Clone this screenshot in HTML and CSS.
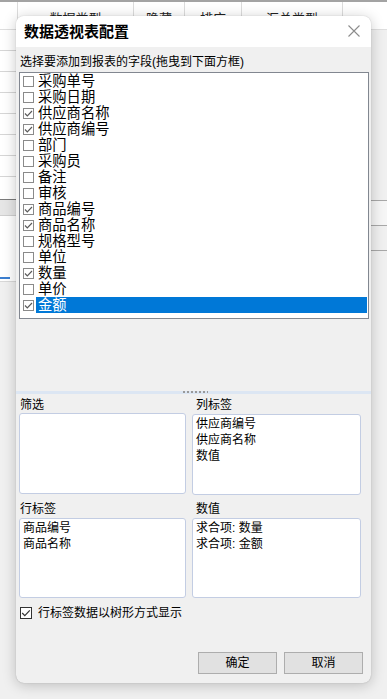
FILE: index.html
```html
<!DOCTYPE html>
<html lang="zh-CN">
<head>
<meta charset="utf-8">
<title>数据透视表配置</title>
<link rel="stylesheet" href="styles.css">
</head>
<body>
<div class="app">
  <div class="grid-head">
    <div class="gh c0"></div>
    <div class="gh c1">数据类型</div>
    <div class="gh c2">隐藏</div>
    <div class="gh c3">排序</div>
    <div class="gh c4">汇总类型</div>
    <div class="gh c5"></div>
  </div>
  <div class="app-main">
    <div class="left-col">
      <div class="lrow"></div><div class="lrow"></div><div class="lrow"></div><div class="lrow"></div>
      <div class="lrow"></div><div class="lrow"></div><div class="lrow"></div>
      <div class="lrow last"></div>
      <div class="lband"></div>
      <div class="lwhite"><div class="lblue"></div></div>
    </div>
    <div class="mid"></div>
    <div class="right-col">
      <div class="rtop"></div>
      <div class="rrow light"></div>
      <div class="rrow"></div>
    </div>
  </div>
</div>

<div class="dialog">
  <div class="titlebar">
    <span class="title">数据透视表配置</span>
    <svg class="close" width="12" height="12" viewBox="0 0 12 12"><path d="M0.5 0.5 L11.5 11.5 M11.5 0.5 L0.5 11.5" stroke="#8c8c8c" stroke-width="1.1" fill="none"/></svg>
  </div>
  <div class="top-pane">
    <div class="hint">选择要添加到报表的字段(拖曳到下面方框)</div>
    <div class="list">
      <div class="item"><span class="cb"></span><span class="lbl">采购单号</span></div>
      <div class="item"><span class="cb"></span><span class="lbl">采购日期</span></div>
      <div class="item"><span class="cb on"><svg viewBox="0 0 11 11"><path d="M2 5.5 L4.3 7.8 L9 3" /></svg></span><span class="lbl">供应商名称</span></div>
      <div class="item"><span class="cb on"><svg viewBox="0 0 11 11"><path d="M2 5.5 L4.3 7.8 L9 3" /></svg></span><span class="lbl">供应商编号</span></div>
      <div class="item"><span class="cb"></span><span class="lbl">部门</span></div>
      <div class="item"><span class="cb"></span><span class="lbl">采购员</span></div>
      <div class="item"><span class="cb"></span><span class="lbl">备注</span></div>
      <div class="item"><span class="cb"></span><span class="lbl">审核</span></div>
      <div class="item"><span class="cb on"><svg viewBox="0 0 11 11"><path d="M2 5.5 L4.3 7.8 L9 3" /></svg></span><span class="lbl">商品编号</span></div>
      <div class="item"><span class="cb on"><svg viewBox="0 0 11 11"><path d="M2 5.5 L4.3 7.8 L9 3" /></svg></span><span class="lbl">商品名称</span></div>
      <div class="item"><span class="cb"></span><span class="lbl">规格型号</span></div>
      <div class="item"><span class="cb"></span><span class="lbl">单位</span></div>
      <div class="item"><span class="cb on"><svg viewBox="0 0 11 11"><path d="M2 5.5 L4.3 7.8 L9 3" /></svg></span><span class="lbl">数量</span></div>
      <div class="item"><span class="cb"></span><span class="lbl">单价</span></div>
      <div class="item"><span class="cb on"><svg viewBox="0 0 11 11"><path d="M2 5.5 L4.3 7.8 L9 3" /></svg></span><span class="lbl sel">金额</span></div>
    </div>
  </div>
  <div class="splitter"><span class="dots"></span></div>
  <div class="bottom-pane">
    <div class="areas">
      <div class="alabel first">筛选</div>
      <div class="alabel">列标签</div>
      <div class="abox r1"></div>
      <div class="abox r1 second">
        <div>供应商编号</div>
        <div>供应商名称</div>
        <div>数值</div>
      </div>
      <div class="alabel first gap">行标签</div>
      <div class="alabel gap">数值</div>
      <div class="abox r2">
        <div>商品编号</div>
        <div>商品名称</div>
      </div>
      <div class="abox r2 second">
        <div>求合项: 数量</div>
        <div>求合项: 金额</div>
      </div>
    </div>
    <div class="tree">
      <span class="cb2"><svg viewBox="0 0 12 12"><path d="M2.2 6 L4.8 8.6 L9.8 3.4" /></svg></span>
      <span>行标签数据以树形方式显示</span>
    </div>
    <div class="buttons">
      <button class="btn">确定</button>
      <button class="btn">取消</button>
    </div>
  </div>
</div>
</body>
</html>
```

FILE: styles.css
```css
* { box-sizing: border-box; }
html, body { margin: 0; padding: 0; }
body {
  width: 387px;
  height: 699px;
  overflow: hidden;
  position: relative;
  background: #f0f0f0;
  font-family: "Liberation Sans", "Noto Sans CJK SC", sans-serif;
  font-size: 12px;
  color: #000;
}

/* background application */
.app { display: flex; flex-direction: column; height: 699px; }
.grid-head {
  display: flex;
  height: 30px;
  border-top: 2px solid #a3a3a3;
  background: #fff;
  border-bottom: 1px solid #dedede;
}
.gh {
  border-right: 1px solid #dcdcdc;
  text-align: center;
  font-size: 13px;
  line-height: 16px;
  padding-top: 9px;
  color: #222;
}
.c0 { width: 18px; }
.c1 { width: 116px; }
.c2 { width: 51px; }
.c3 { width: 57px; }
.c4 { width: 101px; }
.c5 { flex: 1; border-right: 0; }

.app-main { flex: 1; display: flex; }
.left-col { width: 16px; display: flex; flex-direction: column; }
.lrow { height: 21px; background: #fff; border-bottom: 1px solid #d6d6d6; }
.lrow.last { height: 23px; border-bottom: 1px solid #7a7a7a; }
.lband { height: 16px; background: #e6e6e6; border-bottom: 1px solid #cfcfcf; }
.lwhite { height: 66px; background: #fff; position: relative; border-bottom: 1px solid #d8d8d8; }
.lblue { position: absolute; left: 0; bottom: 2px; width: 10px; height: 2px; background: #3c7fd0; }
.mid { flex: 1; }
.right-col { width: 16px; display: flex; flex-direction: column; }
.rtop { height: 171px; border-bottom: 1px solid #a8a8a8; }
.rrow { height: 25px; border-bottom: 1px solid #a8a8a8; }
.rrow.light { background: #f6f6f6; }

/* dialog */
.dialog {
  position: absolute;
  left: 16px;
  top: 16px;
  width: 355px;
  height: 667px;
  background: #f0f0f0;
  border-radius: 8px;
  box-shadow: 0 2px 14px rgba(0, 0, 0, 0.22), 0 0 1px rgba(0, 0, 0, 0.3);
  display: flex;
  flex-direction: column;
  overflow: hidden;
}
.titlebar {
  height: 31px;
  flex: none;
  background: #fff;
  display: flex;
  align-items: center;
  justify-content: space-between;
  padding: 0 11px 0 8px;
}
.title { font-size: 15px; font-weight: bold; line-height: 20px; margin-top: 1px; }
.close { display: block; margin-top: -2px; }

.top-pane { height: 344px; flex: none; padding: 0 2px 0 3px; }
.hint { font-size: 12px; line-height: 16px; margin-top: 7px; padding-left: 1px; height: 18px; }
.list {
  height: 247px;
  background: #fff;
  border: 1px solid #828790;
  padding-right: 1px;
}
.item { height: 16px; display: flex; align-items: center; }
.cb {
  width: 11px;
  height: 11px;
  margin-left: 3px;
  border: 1px solid #8a8a8a;
  background: #fff;
  flex: none;
  position: relative;
}
.cb svg { position: absolute; left: -1px; top: -1px; width: 11px; height: 11px; }
.cb svg path, .cb2 svg path { fill: none; stroke: #5a5a5a; stroke-width: 1.2; }
.lbl {
  flex: 1;
  margin-left: 2px;
  padding-left: 2px;
  font-size: 14.3px;
  line-height: 16px;
  height: 16px;
  white-space: nowrap;
}
.lbl.sel { background: #0078d7; color: #fff; }

.splitter {
  height: 3px;
  flex: none;
  background: #dce6f3;
  display: flex;
  justify-content: center;
}
.dots {
  width: 26px;
  height: 2px;
  margin-left: 2px;
  background-image: radial-gradient(circle, #9a9a9a 0.9px, transparent 1px);
  background-size: 4px 2px;
}

.bottom-pane { flex: 1; display: flex; flex-direction: column; padding: 0 10px 9px 3px; }
.areas {
  display: grid;
  grid-template-columns: 167px 169px;
  column-gap: 6px;
  margin-top: 3px;
}
.alabel { height: 16px; line-height: 16px; font-size: 12px; padding-left: 4px; }
.alabel.first { padding-left: 1px; }
.alabel.gap { margin-top: 6px; height: 17px; }
.abox {
  background: #fff;
  border: 1px solid #c3cde3;
  border-radius: 3px;
  padding: 1px 3px;
  font-size: 12px;
  line-height: 16px;
}
.abox.r1 { height: 81px; }
.abox.r1.second { margin-top: 1px; }
.abox.r2 { height: 80px; }

.tree { display: flex; align-items: center; height: 16px; margin-top: 7px; font-size: 12px; line-height: 16px; }
.cb2 {
  width: 12px;
  height: 12px;
  margin-left: 1px;
  margin-right: 6px;
  border: 1px solid #333;
  background: #fff;
  position: relative;
}
.cb2 svg { position: absolute; left: -1px; top: -1px; width: 12px; height: 12px; }
.cb2 svg path { stroke: #333; }

.buttons { margin-top: auto; display: flex; justify-content: flex-end; gap: 7px; margin-right: -2px; }
.btn {
  width: 79px;
  height: 22px;
  padding: 0;
  background: #e1e1e1;
  border: 1px solid #adadad;
  border-radius: 0;
  font-family: "Liberation Sans", "Noto Sans CJK SC", sans-serif;
  font-size: 12px;
  line-height: 18px;
  color: #000;
}
```
